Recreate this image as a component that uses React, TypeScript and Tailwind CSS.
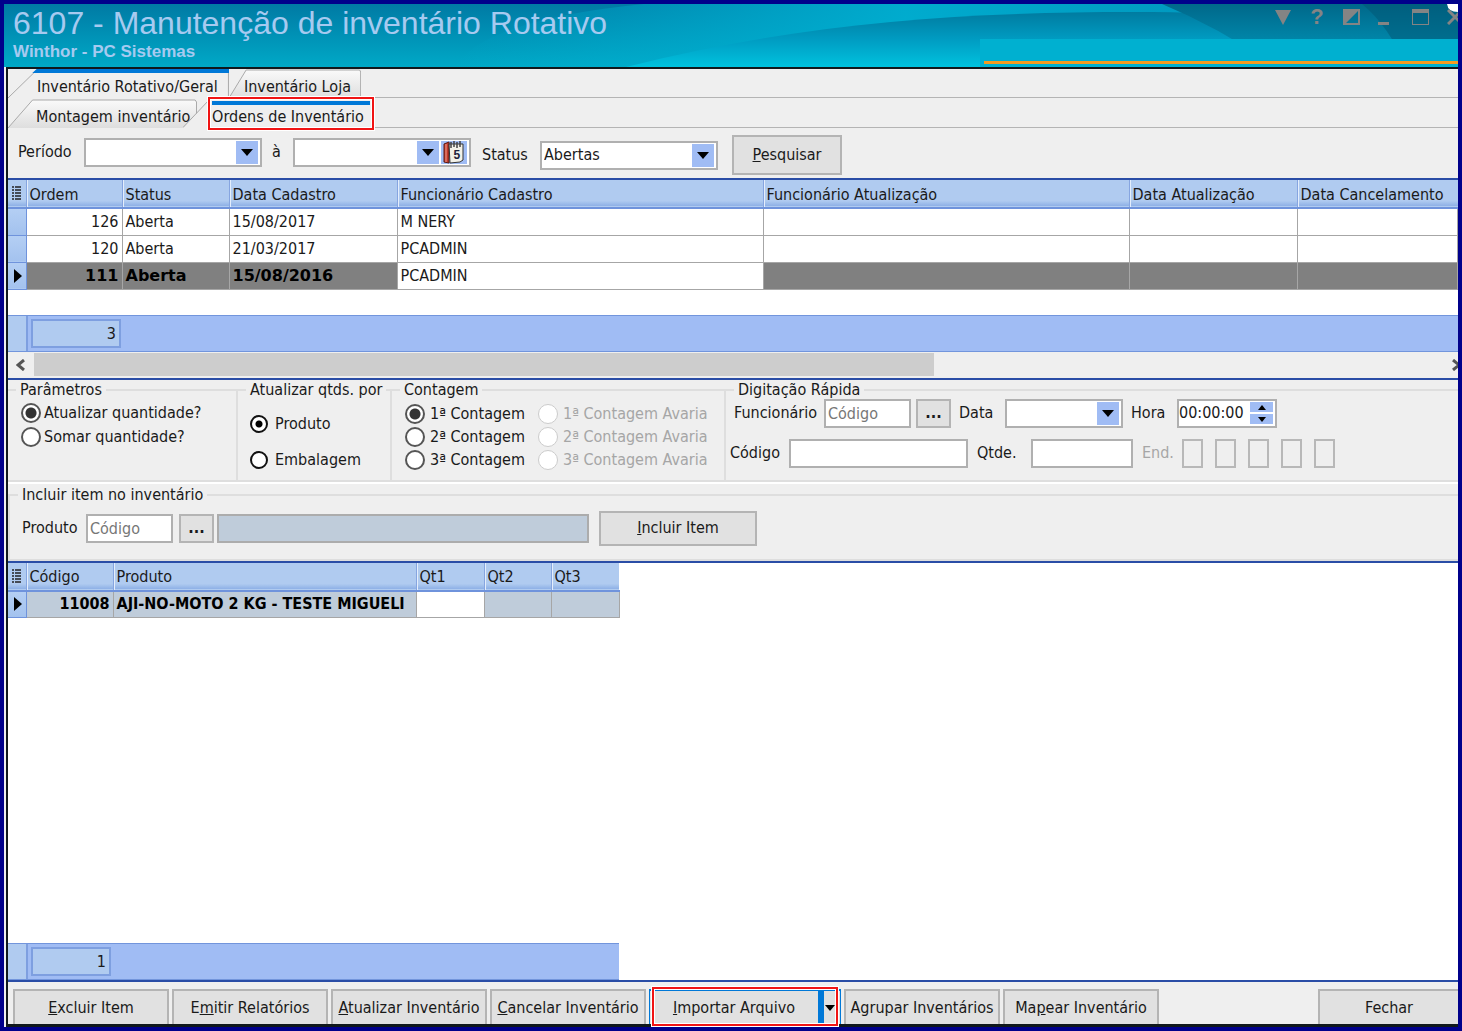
import type { ReactNode } from 'react'
import clsx from 'clsx'

const orders = [
  { id: 126, status: 'Aberta', created: '15/08/2017', employee: 'M NERY' },
  { id: 120, status: 'Aberta', created: '21/03/2017', employee: 'PCADMIN' },
  { id: 111, status: 'Aberta', created: '15/08/2016', employee: 'PCADMIN' },
]

const orderColumns = [
  'Ordem',
  'Status',
  'Data Cadastro',
  'Funcionário Cadastro',
  'Funcionário Atualização',
  'Data Atualização',
  'Data Cancelamento',
]

const counts = ['1ª Contagem', '2ª Contagem', '3ª Contagem']

const selectedOrder = 111

function HeaderArt() {
  return (
    <svg className="absolute inset-0 h-full w-full" viewBox="0 0 1454 63" preserveAspectRatio="none" aria-hidden="true">
      <defs>
        <linearGradient id="base" x1="0" y1="0" x2="0" y2="1">
          <stop offset="0" stopColor="#007aa4" />
          <stop offset="1" stopColor="#00a9c7" />
        </linearGradient>
        <linearGradient id="glow" x1="0" y1="0" x2="1" y2="0">
          <stop offset="0" stopColor="#00b4d4" stopOpacity="0" />
          <stop offset="0.45" stopColor="#00b0d2" stopOpacity="0.9" />
          <stop offset="1" stopColor="#008ab4" stopOpacity="0.9" />
        </linearGradient>
        <linearGradient id="wave" x1="0" y1="0" x2="0" y2="1">
          <stop offset="0" stopColor="#007ba0" />
          <stop offset="0.5" stopColor="#009cc2" />
          <stop offset="1" stopColor="#00c2de" />
        </linearGradient>
        <linearGradient id="shade" x1="0" y1="0" x2="0" y2="1">
          <stop offset="0" stopColor="#00688a" />
          <stop offset="1" stopColor="#009cc0" />
        </linearGradient>
      </defs>
      <rect width="1454" height="63" fill="url(#base)" />
      <path d="M450 63 Q480 16 640 0 H1454 V63 Z" fill="url(#glow)" />
      <path d="M622 63 C800 18 960 8 1130 8 C1260 8 1360 20 1454 40 V63 Z" fill="url(#wave)" />
      <path d="M1158 0 H1454 V63 H1272 Q1216 24 1158 0 Z" fill="url(#shade)" />
      <path d="M1358 0 H1454 V63 H1402 Q1385 22 1358 0 Z" fill="#005674" fillOpacity="0.5" />
      <path d="M1443 0 H1454 V8 Q1444 8 1443 0 Z" fill="#fff" />
    </svg>
  )
}

function WindowButtons() {
  return (
    <div className="relative flex items-start gap-[18px] pt-[5px] text-[#848484]">
      <button aria-label="Recolher">
        <svg width="16" height="16" viewBox="0 0 16 16" fill="currentColor"><path d="M0 1H16L8 16Z" /></svg>
      </button>
      <button aria-label="Ajuda" className="w-4 font-[Liberation_Sans] text-[22px] leading-4 font-bold">?</button>
      <button aria-label="Alternar tema">
        <svg width="17" height="16" viewBox="0 0 17 16" fill="currentColor">
          <path d="M0 0H17V16H0ZM15 2L3 14H15Z" fillRule="evenodd" />
        </svg>
      </button>
      <button aria-label="Minimizar">
        <svg width="16" height="16" viewBox="0 0 16 16" fill="currentColor"><path d="M0 13H11V16H0Z" /></svg>
      </button>
      <button aria-label="Maximizar">
        <svg width="17" height="16" viewBox="0 0 17 16" fill="currentColor">
          <path d="M0 0H17V16H0ZM1 4V15H16V4Z" fillRule="evenodd" />
        </svg>
      </button>
      <button aria-label="Fechar janela" className="w-[11px] overflow-hidden">
        <svg className="max-w-none" width="16" height="16" viewBox="0 0 16 16" stroke="currentColor" strokeWidth="3"><path d="M1 1L15 15M15 1L1 15" /></svg>
      </button>
    </div>
  )
}

function Tab({ children, active, className }: { children: ReactNode; active?: boolean; className?: string }) {
  return (
    <button
      role="tab"
      aria-selected={!!active}
      className={clsx('relative h-[29px] text-left whitespace-nowrap', className)}
    >
      <svg className="absolute inset-0 h-full w-full" viewBox="0 0 200 29" preserveAspectRatio="none" aria-hidden="true">
        <defs>
          <linearGradient id="tabFill" x1="0" y1="0" x2="0" y2="1">
            <stop offset="0" stopColor="#fafafa" />
            <stop offset="1" stopColor="#dedede" />
          </linearGradient>
        </defs>
        <path
          d="M0 29L26 1H198L199.500 3V29"
          fill={active ? '#efefef' : 'url(#tabFill)'}
          stroke="#a9a9a9"
          vectorEffect="non-scaling-stroke"
        />
        {active && <path d="M26 0H200V4H22Z" fill="#0078d7" />}
      </svg>
      <span className="relative">{children}</span>
    </button>
  )
}

function Caret() {
  return (
    <svg width="12" height="7" viewBox="0 0 12 7" aria-hidden="true"><path d="M0 0H12L6 7Z" fill="#000" /></svg>
  )
}

function DateField({ label, className, calendar }: { label: string; className?: string; calendar?: boolean }) {
  return (
    <div className={clsx('flex h-[29px] items-center gap-[2px] border-2 border-[#b0b0b0] bg-white pr-[2px]', className)}>
      <input aria-label={label} className="min-w-0 flex-1 px-1 outline-none" />
      <button aria-label={`Abrir ${label}`} className="flex h-[23px] w-[22px] items-center justify-center bg-[#a0bcf4]">
        <Caret />
      </button>
      {calendar && (
        <button aria-label="Calendário" className="flex h-[23px] w-[26px] items-center justify-center bg-[#a0bcf4]">
          <svg width="22" height="24" viewBox="0 0 22 24">
            <path d="M1 4L6 2V23L1 22Z" fill="#c0392b" stroke="#5a1a12" />
            <path d="M3 4V22" stroke="#f0a090" />
            <path d="M6 4H20V20L17 22L7 23Z" fill="#f3f1e8" stroke="#333" />
            <path d="M8 2V8M11 1V7M14 2V8M17 1V7" stroke="#444" strokeWidth="1.500" />
            <text x="10.500" y="19" fontSize="12" fontWeight="bold" fontFamily="Liberation Sans" fill="#22223c">5</text>
          </svg>
        </button>
      )}
    </div>
  )
}

function Radio({ name, label, checked, disabled, small, className }: {
  name: string
  label: string
  checked?: boolean
  disabled?: boolean
  small?: boolean
  className?: string
}) {
  return (
    <label className={clsx('flex items-center whitespace-nowrap', disabled && 'text-[#a6a6a6]', className)}>
      <input
        type="radio"
        name={name}
        defaultChecked={checked}
        disabled={disabled}
        className={clsx(
          'shrink-0 appearance-none rounded-full bg-white',
          small ? 'h-[18px] w-[18px]' : 'h-5 w-5',
          disabled && 'border border-[#cccccc]',
          !disabled && small && 'border-2 border-[#111] checked:bg-[radial-gradient(circle,#000_3px,#fff_4px)]',
          !disabled && !small && 'border-2 border-[#555] checked:bg-[radial-gradient(circle,#333_5px,#fff_6px)]',
        )}
      />
      {label}
    </label>
  )
}

function Group({ title, children, className }: { title: string; children: ReactNode; className?: string }) {
  return (
    <fieldset className={clsx('min-w-0 border-2 border-[#dedede]', className)}>
      <legend className="ml-2 px-1 leading-5 whitespace-nowrap">{title}</legend>
      {children}
    </fieldset>
  )
}

function PushButton({ children, className }: { children: ReactNode; className?: string }) {
  return (
    <button className={clsx('border-2 border-[#b4b4b4] bg-[#e1e1e1] whitespace-nowrap', className)}>{children}</button>
  )
}

function GridMenuIcon() {
  return (
    <svg className="mx-auto" width="9" height="15" viewBox="0 0 9 15" aria-hidden="true">
      <path d="M0 1H2M0 4H2M0 7H2M0 10H2M0 13H2M3 1H9M3 4H9M3 7H9M3 10H9M3 13H9" stroke="#222" strokeWidth="1.500" />
    </svg>
  )
}

function RowMarker() {
  return (
    <svg className="ml-[6px]" width="8" height="14" viewBox="0 0 8 14" aria-hidden="true"><path d="M0 0L8 7L0 14Z" /></svg>
  )
}

const headCell = 'overflow-hidden border-l border-[#86a5e0] px-[3px] pt-[2px] text-left font-normal whitespace-nowrap shadow-[inset_1px_0_#e4eefc]'
const cell = 'overflow-hidden border border-[#a6a6a6] px-[3px] whitespace-nowrap'
const markerCell = 'border-r border-b border-[#6f93dc] bg-gradient-to-b from-[#b4cff4] to-[#a3c2ee]'
const headRow = 'h-7 border-b-2 border-[#6f93dc] bg-gradient-to-b from-[#b0cbf0] from-80% to-[#8eb0e6]'

function OrdersGrid() {
  return (
    <section className="border-y-2 border-[#2a4da6] bg-white">
      <table className="w-full table-fixed border-collapse">
        <colgroup>
          <col className="w-[18px]" />
          <col className="w-[96px]" />
          <col className="w-[107px]" />
          <col className="w-[168px]" />
          <col className="w-[366px]" />
          <col className="w-[366px]" />
          <col className="w-[168px]" />
          <col />
        </colgroup>
        <thead>
          <tr className={headRow}>
            <th aria-label="Colunas"><GridMenuIcon /></th>
            {orderColumns.map((name) => (
              <th key={name} className={headCell}>{name}</th>
            ))}
          </tr>
        </thead>
        <tbody>
          {orders.map((order) => {
            const selected = order.id === selectedOrder
            const mark = selected && "bg-[#808080] font-['DejaVu_Sans',sans-serif] font-bold text-black"
            return (
              <tr key={order.id} className="h-[27px]">
                <td className={markerCell}>{selected && <RowMarker />}</td>
                <td className={clsx(cell, mark, 'text-right')}>{order.id}</td>
                <td className={clsx(cell, mark)}>{order.status}</td>
                <td className={clsx(cell, mark)}>{order.created}</td>
                <td className={cell}>{order.employee}</td>
                <td className={clsx(cell, mark)} />
                <td className={clsx(cell, mark)} />
                <td className={clsx(cell, mark)} />
              </tr>
            )
          })}
        </tbody>
      </table>
      <div className="h-[25px]" />
      <GridFooter total={orders.length} totalClass="w-[90px]" />
      <div className="flex h-[26px] items-center bg-[#efefef]">
        <button aria-label="Rolar para a esquerda" className="flex h-full w-[26px] items-center justify-center">
          <svg width="10" height="12" viewBox="0 0 10 12" fill="none" stroke="#555" strokeWidth="3"><path d="M8 1L2 6L8 11" /></svg>
        </button>
        <div className="h-[23px] w-[900px] bg-[#cdcdcd]" />
        <button aria-label="Rolar para a direita" className="ml-auto w-[6px] overflow-hidden">
          <svg className="max-w-none" width="10" height="12" viewBox="0 0 10 12" fill="none" stroke="#555" strokeWidth="3"><path d="M1 1L7 6L1 11" /></svg>
        </button>
      </div>
    </section>
  )
}

function GridFooter({ total, totalClass }: { total: number; totalClass: string }) {
  return (
    <div className="flex h-[37px] items-center border-y border-[#7295dc] bg-[#a0bcf4]">
      <div className="h-full w-5 border-r-2 border-[#7e9fe0] bg-[#b0cbf0]" />
      <output className={clsx('ml-[3px] h-[29px] border-2 border-[#7e9fe0] bg-[#b0cbf0] pr-[3px] text-right leading-[26px]', totalClass)}>
        {total}
      </output>
    </div>
  )
}

function ItemsGrid() {
  return (
    <section className="flex flex-1 flex-col border-y-2 border-[#2a4da6] bg-white">
      <table className="w-[611px] table-fixed border-collapse">
        <colgroup>
          <col className="w-[18px]" />
          <col className="w-[87px]" />
          <col className="w-[303px]" />
          <col className="w-[68px]" />
          <col className="w-[67px]" />
          <col className="w-[68px]" />
        </colgroup>
        <thead>
          <tr className={headRow}>
            <th aria-label="Colunas"><GridMenuIcon /></th>
            {['Código', 'Produto', 'Qt1', 'Qt2', 'Qt3'].map((name) => (
              <th key={name} className={headCell}>{name}</th>
            ))}
          </tr>
        </thead>
        <tbody>
          <tr className="h-[27px] bg-[#bfccda] font-bold text-black">
            <td className={markerCell}><RowMarker /></td>
            <td className={clsx(cell, 'text-right')}>11008</td>
            <td className={cell}>AJI-NO-MOTO 2 KG - TESTE MIGUELI</td>
            <td className={clsx(cell, 'bg-white')} />
            <td className={cell} />
            <td className={cell} />
          </tr>
        </tbody>
      </table>
      <div className="mt-auto w-[611px]">
        <GridFooter total={1} totalClass="w-[80px]" />
      </div>
    </section>
  )
}

const textBox = 'h-[29px] border-2 border-[#b0b0b0] bg-white px-[2px] outline-none placeholder:text-[#777]'

function Parameters() {
  return (
    <section className="flex h-[104px] items-stretch border-b-2 border-white">
      <Group title="Parâmetros" className="w-[230px] border-l-0">
        <div className="flex flex-col gap-1 pt-[3px] pl-[13px]">
          <Radio name="mode" label="Atualizar quantidade?" checked className="h-5 gap-[3px]" />
          <Radio name="mode" label="Somar quantidade?" className="h-5 gap-[3px]" />
        </div>
      </Group>
      <Group title="Atualizar qtds. por" className="w-[154px] border-l-0">
        <div className="flex flex-col gap-4 pt-[14px] pl-3">
          <Radio name="unit" label="Produto" checked small className="h-5 gap-[7px]" />
          <Radio name="unit" label="Embalagem" small className="h-5 gap-[7px]" />
        </div>
      </Group>
      <Group title="Contagem" className="w-[334px] border-l-0">
        <div className="grid grid-cols-[133px_1fr] gap-y-[2px] pt-1 pl-[13px]">
          {counts.map((label, i) => [
            <Radio key={label} name="count" label={label} checked={i === 0} className="h-[21px] gap-[5px]" />,
            <Radio key={`${label} Avaria`} name="count" label={`${label} Avaria`} disabled className="h-[21px] gap-[5px]" />,
          ])}
        </div>
      </Group>
      <Group title="Digitação Rápida" className="flex-1 border-x-0">
        <div className="-mt-px">
          <div className="flex h-[29px] items-center pl-2 whitespace-nowrap">
            <label htmlFor="employee" className="w-[90px]">Funcionário</label>
            <input id="employee" placeholder="Código" className={clsx(textBox, 'w-[87px]')} />
            <PushButton className="ml-[5px] h-[29px] w-[35px] font-bold">...</PushButton>
            <span className="ml-2 w-[46px]">Data</span>
            <DateField label="Data" className="w-[118px]" />
            <label htmlFor="time" className="ml-2 w-[46px]">Hora</label>
            <div className="flex h-[29px] w-[100px] items-center border-2 border-[#b0b0b0] bg-white pr-[2px]">
              <input id="time" defaultValue="00:00:00" className="min-w-0 flex-1 outline-none" />
              <div className="flex flex-col gap-[2px]">
                <button aria-label="Aumentar" className="flex h-[10px] w-[23px] items-center justify-center bg-[#a0bcf4]">
                  <svg width="8" height="5" viewBox="0 0 8 5"><path d="M0 5H8L4 0Z" /></svg>
                </button>
                <button aria-label="Diminuir" className="flex h-[10px] w-[23px] items-center justify-center bg-[#a0bcf4]">
                  <svg width="8" height="5" viewBox="0 0 8 5"><path d="M0 0H8L4 5Z" /></svg>
                </button>
              </div>
            </div>
          </div>
          <div className="mt-[11px] flex h-[29px] items-center pl-1 whitespace-nowrap">
            <label htmlFor="code" className="w-[59px]">Código</label>
            <input id="code" className={clsx(textBox, 'w-[179px]')} />
            <label htmlFor="qty" className="ml-[9px] w-[54px]">Qtde.</label>
            <input id="qty" className={clsx(textBox, 'w-[102px]')} />
            <span className="ml-[9px] w-[40px] text-[#a6a6a6]">End.</span>
            <div className="flex gap-3">
              {[1, 2, 3, 4, 5].map((n) => (
                <input key={n} aria-label={`Endereço ${n}`} disabled className="h-[29px] w-[21px] border-2 border-[#b8b8b8]" />
              ))}
            </div>
          </div>
        </div>
      </Group>
    </section>
  )
}

function ActionBar() {
  return (
    <footer className="flex h-[42px] gap-[3px] pt-[7px] pl-[5px]">
      <PushButton className="w-[156px] border-b-0"><u>E</u>xcluir Item</PushButton>
      <PushButton className="w-[156px] border-b-0">E<u>m</u>itir Relatórios</PushButton>
      <PushButton className="w-[156px] border-b-0"><u>A</u>tualizar Inventário</PushButton>
      <PushButton className="w-[156px] border-b-0"><u>C</u>ancelar Inventário</PushButton>
      <div className="relative flex w-[192px] border-x border-t-2 border-[#0078d7] bg-[#e1e1e1]">
        <button className="flex-1 whitespace-nowrap"><u>I</u>mportar Arquivo</button>
        <button aria-label="Mais opções" className="flex w-[22px] items-center justify-end overflow-hidden border-l-6 border-[#0078d7] pr-[5px]">
          <svg width="10" height="6" viewBox="0 0 10 6"><path d="M0 0H10L5 6Z" /></svg>
        </button>
        <div className="pointer-events-none absolute -top-[4px] -bottom-[2px] inset-x-[2px] border-2 border-[#f01414] shadow-[0_0_0_1px_#fff,inset_0_0_0_1px_#fff]" />
      </div>
      <PushButton className="w-[156px] border-b-0">A<u>g</u>rupar Inventários</PushButton>
      <PushButton className="w-[156px] border-b-0">Ma<u>p</u>ear Inventário</PushButton>
      <PushButton className="ml-auto w-[140px] border-r-0 border-b-0">Fechar</PushButton>
    </footer>
  )
}

export default function App() {
  return (
    <div className="flex min-h-screen flex-col overflow-hidden border-4 border-[#00008b] bg-[#efefef] font-['DejaVu_Sans_Condensed','Noto_Sans',sans-serif] text-base leading-5 text-[#1a1a1a]">
      <header className="relative flex h-[63px] justify-between">
        <HeaderArt />
        <div className="relative pl-[9px] font-[Liberation_Sans,Arial,sans-serif] text-[#a6caf0]">
          <h1 className="pt-px text-[32px] leading-9">6107 - Manutenção de inventário Rotativo</h1>
          <p className="text-[17px] leading-[22px] font-bold">Winthor - PC Sistemas</p>
        </div>
        <div className="absolute right-0 bottom-0 h-7 w-[478px] bg-[#00b0d0] pt-[22px] pl-1">
          <div className="h-[3px] bg-[#f59b20]" />
        </div>
        <WindowButtons />
      </header>

      <main className="ml-[2px] flex flex-1 flex-col border-t-2 border-b-[3px] border-l-2 border-[#10181c]">
        <nav role="tablist" className="flex h-[29px] border-b border-[#b4b4b4]">
          <Tab active className="w-[221px] pt-[6px] pl-[29px]">Inventário Rotativo/Geral</Tab>
          <Tab className="w-[132px] pt-[6px] pl-[15px]">Inventário Loja</Tab>
        </nav>
        <nav role="tablist" className="flex h-[30px] border-b border-[#b4b4b4] pt-px">
          <Tab className="w-[189px] pt-[6px] pl-7">Montagem inventário</Tab>
          <div className="relative -ml-[14px] h-[29px] w-[191px]">
            <button role="tab" aria-selected className="relative h-full w-full pt-[6px] pl-[19px] whitespace-nowrap">
              <svg className="absolute top-0 left-0" width="191" height="29" viewBox="0 0 191 29" aria-hidden="true">
                <path d="M0 29L26 1H191V29Z" fill="#efefef" />
                <path d="M0 28.500L26 1" stroke="#a9a9a9" />
              </svg>
              <span className="relative">Ordens de Inventário</span>
            </button>
            <div className="pointer-events-none absolute -top-[2px] right-0 -bottom-[2px] w-[166px] border-2 border-[#f01414] p-[2px] shadow-[0_0_0_1px_#fff,inset_0_0_0_1px_#fff]">
              <div className="h-1 bg-[#0078d7]" />
            </div>
          </div>
        </nav>

        <form className="flex h-[50px] items-center pl-[10px] whitespace-nowrap" onSubmit={(e) => e.preventDefault()}>
          <div className="flex items-center pb-[2px]">
            <span className="w-[66px]">Período</span>
            <DateField label="Período inicial" className="w-[178px]" />
            <span className="ml-[10px] w-[21px]">à</span>
            <DateField label="Período final" calendar className="w-[178px]" />
          </div>
          <div className="flex items-center pt-1">
            <label htmlFor="status" className="ml-[11px] w-[58px]">Status</label>
            <div className="relative">
              <select id="status" className="h-[29px] w-[178px] appearance-none border-2 border-[#b0b0b0] bg-white px-[2px] outline-none">
                <option>Abertas</option>
              </select>
              <span className="pointer-events-none absolute top-[3px] right-1 flex h-[23px] w-[22px] items-center justify-center bg-[#a0bcf4]">
                <Caret />
              </span>
            </div>
            <PushButton className="ml-[14px] h-10 w-[110px]"><u>P</u>esquisar</PushButton>
          </div>
        </form>

        <OrdersGrid />
        <Parameters />

        <section className="h-[77px] pt-px">
          <Group title="Incluir item no inventário" className="h-full border border-r-0">
            <div className="flex items-center pt-[6px] pl-3">
              <label htmlFor="product" className="w-[64px]">Produto</label>
              <input id="product" placeholder="Código" className={clsx(textBox, 'w-[87px]')} />
              <PushButton className="ml-[6px] h-[29px] w-[35px] font-bold">...</PushButton>
              <input aria-label="Descrição do produto" readOnly className="ml-[3px] h-[29px] w-[372px] border-2 border-[#acacac] bg-[#bfccda]" />
              <PushButton className="ml-[10px] h-[35px] w-[158px]"><u>I</u>ncluir Item</PushButton>
            </div>
          </Group>
        </section>

        <ItemsGrid />
        <ActionBar />
      </main>
    </div>
  )
}
